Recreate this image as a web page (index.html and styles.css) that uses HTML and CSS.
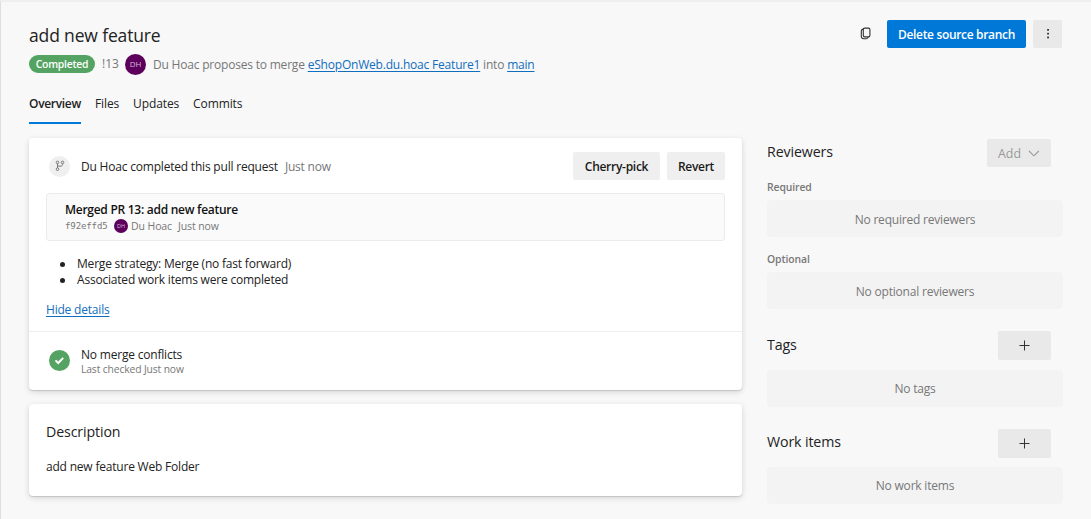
FILE: index.html
```html
<!DOCTYPE html>
<html lang="en">
<head>
<meta charset="utf-8">
<title>Pull request 13: add new feature</title>
<link rel="stylesheet" href="styles.css">
</head>
<body>
<div class="page">
  <header class="header">
    <div class="heading">
      <h1 class="title"><span>add new feature</span></h1>
      <div class="summary">
        <span class="status">Completed</span>
        <span class="pr-id">!13</span>
        <span class="avatar">DH</span>
        <span class="proposal">Du Hoac proposes to merge <a href="#">eShopOnWeb.du.hoac Feature1</a> into <a href="#">main</a></span>
      </div>
    </div>
    <div class="actions">
      <svg class="copy-icon" width="12" height="13" viewBox="0 0 12 13" fill="none" stroke="#333" stroke-width="1.1"><rect x="3.3" y="1.1" width="6.6" height="8.8" rx="1.3"/><path d="M3.2 2.1C2 2.3 1.3 3 1.3 4.1v5.1c0 1.6.9 2.5 2.5 2.5h2.6c1 0 1.6-.6 1.8-1.7"/></svg>
      <button class="btn primary">Delete source branch</button>
      <button class="btn more" aria-label="More"><svg width="4" height="12" viewBox="0 0 4 12" fill="#222"><rect x="1.2" y="1" width="1.7" height="1.7"/><rect x="1.2" y="4.8" width="1.7" height="1.7"/><rect x="1.2" y="8.6" width="1.7" height="1.7"/></svg></button>
    </div>
  </header>

  <nav class="tabs">
    <a class="tab active">Overview</a>
    <a class="tab">Files</a>
    <a class="tab">Updates</a>
    <a class="tab">Commits</a>
  </nav>

  <div class="columns">
    <main class="main">
      <section class="card">
        <div class="completion">
          <div class="event">
            <span class="round branch"><svg width="10" height="12" viewBox="0 0 10 12" fill="none" stroke="#777" stroke-width="1"><circle cx="2.5" cy="2.4" r="1.3"/><circle cx="7.5" cy="2.4" r="1.3"/><circle cx="2.5" cy="9.2" r="1.3"/><path d="M2.5 3.7v4.2M7.5 3.7v.8c0 1-.6 1.6-1.6 1.6H2.5"/></svg></span>
            <span class="event-text">Du Hoac completed this pull request</span>
            <span class="event-time">Just now</span>
            <div class="event-buttons">
              <button class="btn pick">Cherry-pick</button>
              <button class="btn revert">Revert</button>
            </div>
          </div>
          <div class="commit">
            <div class="commit-title">Merged PR 13: add new feature</div>
            <div class="commit-meta">
              <span class="hash">f92effd5</span>
              <span class="avatar small">DH</span>
              <span class="author">Du Hoac</span>
              <span class="when">Just now</span>
            </div>
          </div>
          <ul class="details">
            <li>Merge strategy: Merge (no fast forward)</li>
            <li>Associated work items were completed</li>
          </ul>
          <a class="toggle" href="#">Hide details</a>
        </div>
        <div class="check">
          <span class="round ok"><svg width="11" height="9" viewBox="0 0 11 9" fill="none" stroke="#fff" stroke-width="2"><path d="M1.5 4.4 4.2 7 9.2 1.9"/></svg></span>
          <div class="check-text">
            <div class="check-title">No merge conflicts</div>
            <div class="check-sub">Last checked Just now</div>
          </div>
        </div>
      </section>
      <section class="card description">
        <h2 class="section-title">Description</h2>
        <p class="desc-text">add new feature Web Folder</p>
      </section>
    </main>

    <aside class="side">
      <section class="reviewers">
        <div class="group-head"><h2 class="section-title">Reviewers</h2>
          <button class="btn add">Add <svg width="12" height="7" viewBox="0 0 12 7" fill="none" stroke="#999" stroke-width="1.1"><path d="M1 1l4.9 4.8L10.8 1"/></svg></button></div>
        <div class="label">Required</div>
        <div class="empty">No required reviewers</div>
        <div class="label optional">Optional</div>
        <div class="empty">No optional reviewers</div>
      </section>
      <section class="group">
        <div class="group-head"><h2 class="section-title">Tags</h2>
          <button class="btn plus" aria-label="Add tag"><svg width="11" height="11" viewBox="0 0 11 11" stroke="#333" stroke-width="1"><path d="M5.5.5v10M.5 5.5h10"/></svg></button></div>
        <div class="empty">No tags</div>
      </section>
      <section class="group work">
        <div class="group-head"><h2 class="section-title">Work items</h2>
          <button class="btn plus" aria-label="Add work item"><svg width="11" height="11" viewBox="0 0 11 11" stroke="#333" stroke-width="1"><path d="M5.5.5v10M.5 5.5h10"/></svg></button></div>
        <div class="empty">No work items</div>
      </section>
    </aside>
  </div>
</div>
</body>
</html>
```
FILE: styles.css
```css
* { box-sizing: border-box; }
body {
  margin: 0;
  background: #f8f8f8;
  color: #222;
  font: 12px/16px "Open Sans", "Noto Sans", sans-serif;
  letter-spacing: -0.2px;
}
.page {
  height: 519px;
  overflow: hidden;
  border-top: 2px solid #efefef;
  border-left: 1px solid #dedede;
  padding: 18px 28px 0 28px;
}
h1, h2, p { margin: 0; font-weight: 400; }
a[href] { color: #106ebe; text-underline-offset: 1.5px; }

.header { display: flex; justify-content: space-between; height: 56px; }
.title { font-size: 17.5px; line-height: 30px; letter-spacing: -0.15px; }
.summary { display: flex; align-items: center; height: 28px; color: #777; }
.status {
  width: 66px; height: 18px; border-radius: 9px;
  background: #55a362; color: #fff;
  font-size: 10.4px; font-weight: 600; line-height: 18px; text-align: center;
  letter-spacing: -0.25px;
}
.pr-id { width: 30px; padding-left: 7px; letter-spacing: 0; }
.avatar {
  display: flex; align-items: center; justify-content: center;
  flex: none; width: 21px; height: 21px; border-radius: 50%;
  background: #5c005c; color: #d9b8d9; font-size: 8px; letter-spacing: 0;
}
.avatar.small { width: 14px; height: 14px; font-size: 5.5px; }
.proposal { margin-left: 7px; padding-top: 1px; white-space: nowrap; }

.actions { display: flex; align-items: flex-start; }
.copy-icon { margin: 7px 15px 0 0; }
.btn {
  display: flex; align-items: center; justify-content: center;
  height: 28px; padding: 0; border: 0; border-radius: 2px;
  background: #efefef; color: #1a1a1a;
  font: 600 12px/16px "Open Sans", "Noto Sans", sans-serif;
  letter-spacing: -0.28px; white-space: nowrap;
}
.btn.primary { width: 139px; padding-top: 1px; background: #0078d7; color: #fff; letter-spacing: -0.33px; }
.btn.more { width: 29px; margin: 0 1px 0 7px; background: #e9e9e9; }

.tabs { display: flex; gap: 14px; height: 48px; padding-top: 12px; }
.tab { height: 36px; padding-top: 8px; letter-spacing: -0.12px; white-space: nowrap; }
.tab.active {
  width: 52px; font-weight: 600; letter-spacing: -0.32px;
  border-bottom: 2px solid #0078d7;
}

.columns { display: flex; gap: 25px; margin-top: 14px; }
.main { width: 713px; flex: none; }
.card {
  background: #fff; border-radius: 4px;
  box-shadow: 0 1px 1px rgba(0,0,0,.13), 0 2px 6px rgba(0,0,0,.14);
}
.completion { height: 194px; padding: 14px 17px 0; border-bottom: 1px solid #efefef; }
.event { display: flex; align-items: center; height: 28px; }
.round {
  display: flex; align-items: center; justify-content: center;
  flex: none; width: 21px; height: 21px; margin-left: 3px; border-radius: 50%;
}
.branch { background: #efefef; }
.ok { background: #55a362; }
.event-text { margin-left: 11px; padding-top: 1px; }
.event-time { margin-left: 7px; padding-top: 1px; color: #777; }
.event-buttons { display: flex; gap: 7px; margin-left: auto; }
.event-buttons .btn { padding-top: 1px; }
.pick { width: 87px; }
.revert { width: 58px; }
.commit {
  height: 48px; margin-top: 13px; padding: 8px 18px;
  border: 1px solid #ebebeb; border-radius: 3px; background: #fafafa;
}
.commit-title { font-weight: 600; color: #111; letter-spacing: -0.27px; }
.commit-meta {
  display: flex; align-items: center; height: 16px;
  font-size: 10.5px; letter-spacing: -0.1px; color: #777;
}
.hash { width: 49px; font-family: "DejaVu Sans Mono", monospace; font-size: 9px; }
.author { margin-left: 3px; }
.when { margin-left: 6px; }
.details { margin: 15px 0 0; padding-left: 14px; list-style: none; }
.details li { display: flex; align-items: center; gap: 12px; }
.details li::before {
  content: ""; width: 5px; height: 5px; border-radius: 50%; background: #222;
}
.toggle { display: inline-block; margin-top: 14px; }
.check { display: flex; height: 58px; padding: 18px 17px 0; }
.check-text { margin: -3px 0 0 11px; }
.check-sub { font-size: 10.3px; line-height: 13px; letter-spacing: -0.12px; color: #777; }
.description { height: 92px; margin-top: 14px; padding: 18px 17px; }
.section-title { font-size: 14.2px; line-height: 20px; letter-spacing: -0.12px; }
.desc-text { margin-top: 17px; }

.side { width: 296px; flex: none; }
.group-head {
  display: flex; align-items: center; justify-content: space-between;
  height: 29px; padding-right: 12px;
}
.reviewers .group-head { align-items: flex-start; padding-top: 1px; }
.reviewers .section-title { padding-top: 3px; }
.add {
  width: 64px; gap: 7px; padding-top: 1px; background: #e9e9e9; color: #999;
  font-size: 12.4px; font-weight: 500; letter-spacing: 0;
}
.plus { width: 53px; height: 29px; background: #e9e9e9; }
.label {
  margin: 12px 0 5px; font-size: 10.4px; font-weight: 600;
  letter-spacing: -0.1px; color: #777;
}
.label.optional { margin-top: 14px; }
.empty {
  height: 37px; border-radius: 4px; background: #f3f3f3;
  color: #777; line-height: 38px; text-align: center;
}
.reviewers .empty { line-height: 39px; }
.group { padding-top: 22px; }
.group .section-title { padding-bottom: 2px; }
.group .empty { margin-top: 10px; }
.work .empty { margin-top: 9px; }
.work .section-title { padding-bottom: 3px; }
```
